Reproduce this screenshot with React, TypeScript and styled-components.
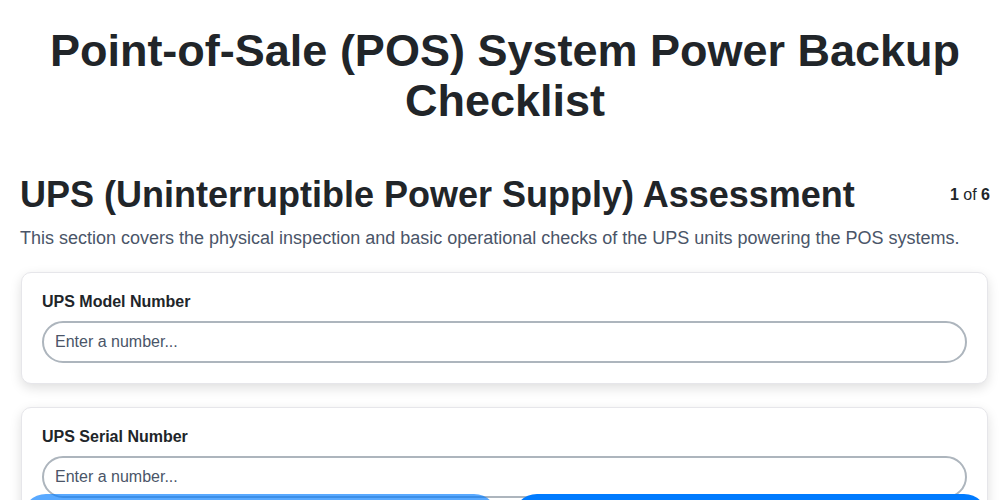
import React, { useState } from 'react';
import styled, { createGlobalStyle } from 'styled-components';

const GlobalStyle = createGlobalStyle`
  body {
    margin: 0;
    background: #fff;
    font-family: "Liberation Sans", Arial, sans-serif;
    color: #212529;
  }
`;

const Page = styled.div`
  padding: 0 10px 80px 20px;
`;

const Title = styled.h1`
  font-size: 45px;
  line-height: 50px;
  font-weight: 700;
  text-align: center;
  margin: 26px 0 47px;
  color: #212529;
`;

const SectionHeader = styled.div`
  display: flex;
  align-items: center;
  justify-content: space-between;
`;

const SectionTitle = styled.h2`
  font-size: 36px;
  line-height: 43px;
  font-weight: 700;
  margin: 0;
  color: #212529;
`;

const Progress = styled.span`
  font-size: 16px;
  color: #212529;
  b {
    font-weight: 700;
  }
`;

const Description = styled.p`
  font-size: 18px;
  line-height: 27px;
  color: #4a5568;
  margin: 9px 0 20px;
`;

const Card = styled.div`
  background: #fff;
  border: 1px solid #e6e6ea;
  border-radius: 10px;
  box-shadow: 0 4px 12px rgba(0, 0, 0, 0.13);
  padding: 19px 20px 20px;
  margin: 0 2px 23px 1px;
`;

const Label = styled.label`
  display: block;
  font-size: 16px;
  line-height: 19px;
  font-weight: 700;
  color: #212529;
  margin-bottom: 10px;
`;

const Input = styled.input`
  display: block;
  box-sizing: border-box;
  width: 100%;
  height: 42px;
  padding: 0 11px;
  font-size: 16px;
  font-family: "Liberation Sans", Arial, sans-serif;
  color: #212529;
  border: 2px solid #adb5bd;
  border-radius: 21px;
  outline: none;
  &::placeholder {
    color: #4a5568;
  }
`;

const Footer = styled.div`
  position: fixed;
  left: 0;
  right: 0;
  bottom: -42px;
  display: flex;
  gap: 15px;
  padding: 0 12px 0 22px;
`;

const NavButton = styled.button<{ $disabled?: boolean }>`
  flex: 1;
  height: 48px;
  border: none;
  border-radius: 24px;
  background: #007bff;
  color: #fff;
  font-size: 16px;
  font-weight: 700;
  font-family: "Liberation Sans", Arial, sans-serif;
  opacity: ${(p) => (p.$disabled ? 0.65 : 1)};
  cursor: ${(p) => (p.$disabled ? 'default' : 'pointer')};
`;

const fields = ['UPS Model Number', 'UPS Serial Number'];

const App = () => {
  const [values, setValues] = useState<Record<string, string>>({});

  return (
    <>
      <GlobalStyle />
      <Page>
        <Title>Point-of-Sale (POS) System Power Backup Checklist</Title>
        <SectionHeader>
          <SectionTitle>UPS (Uninterruptible Power Supply) Assessment</SectionTitle>
          <Progress>
            <b>1</b> of <b>6</b>
          </Progress>
        </SectionHeader>
        <Description>
          This section covers the physical inspection and basic operational checks of the UPS units powering the POS systems.
        </Description>
        {fields.map((f) => (
          <Card key={f}>
            <Label>{f}</Label>
            <Input
              type="text"
              placeholder="Enter a number..."
              value={values[f] || ''}
              onChange={(e) => setValues({ ...values, [f]: e.target.value })}
            />
          </Card>
        ))}
      </Page>
      <Footer>
        <NavButton $disabled>Previous</NavButton>
        <NavButton>Next</NavButton>
      </Footer>
    </>
  );
};

export default App;
